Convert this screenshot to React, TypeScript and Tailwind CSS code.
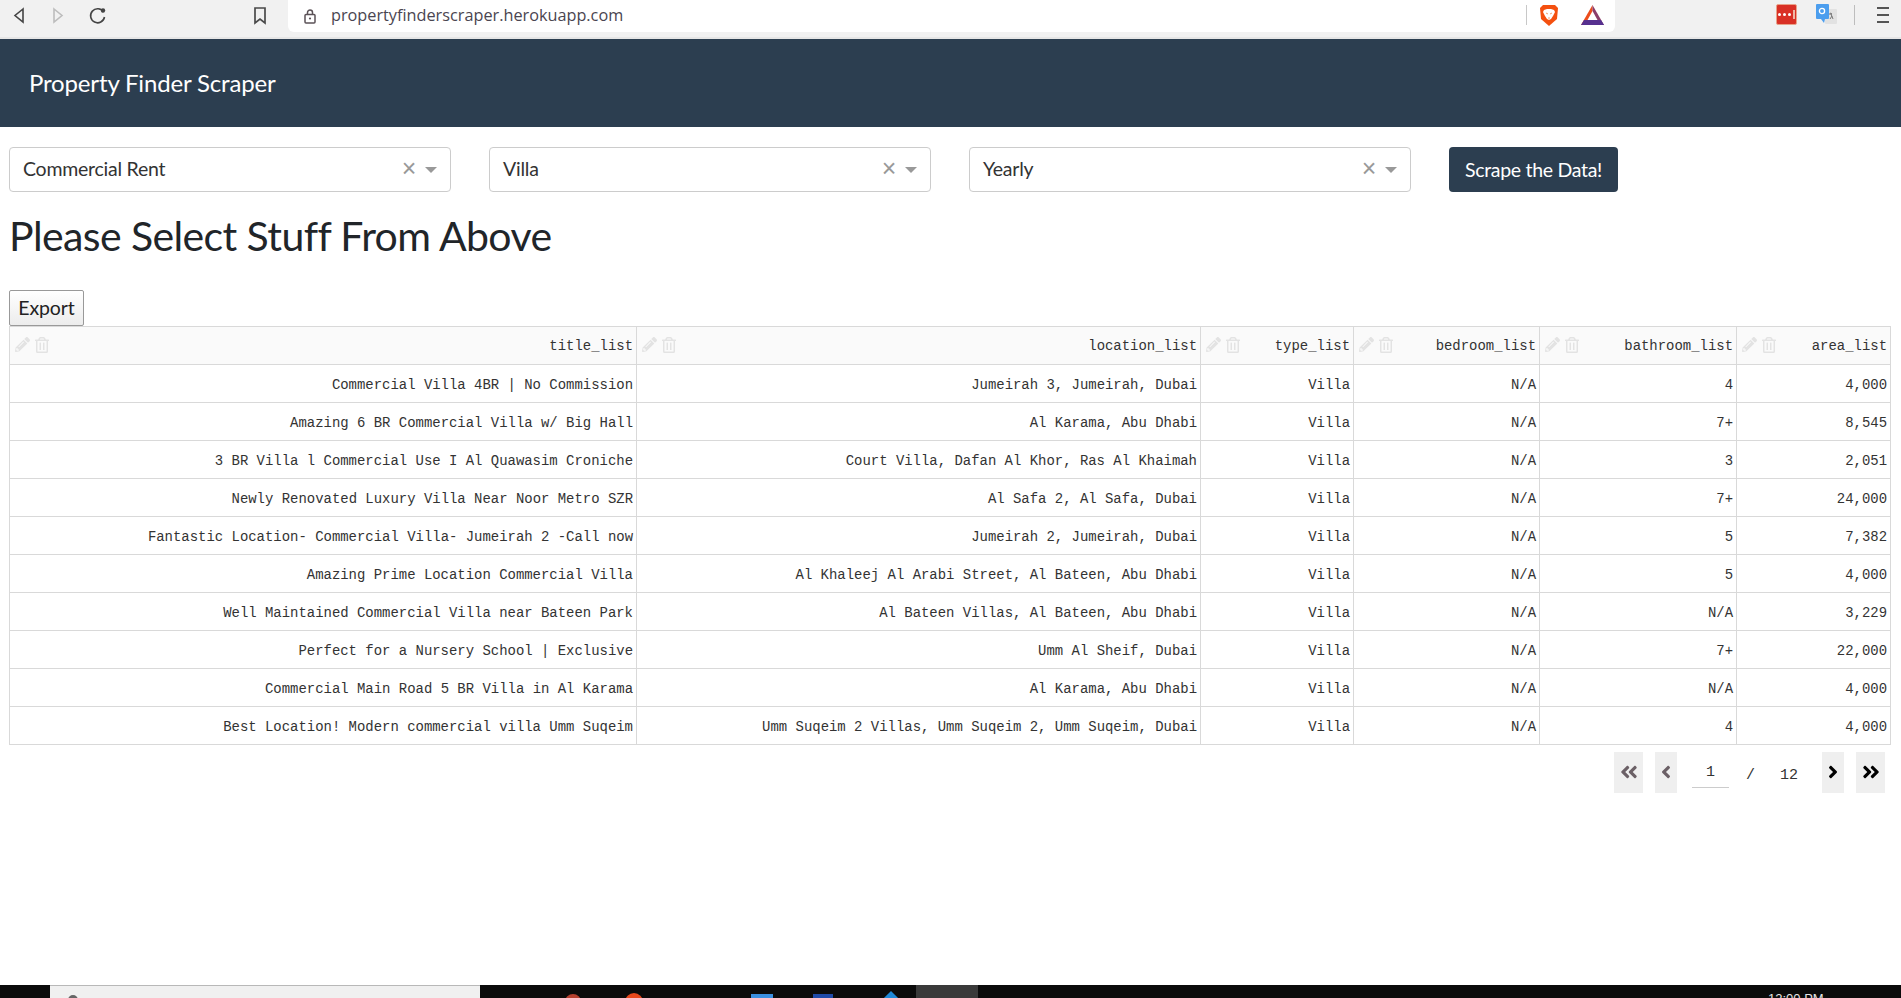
import { FaAngleDoubleLeft, FaAngleDoubleRight, FaAngleLeft, FaAngleRight, FaPencilAlt, FaRegTrashAlt } from 'react-icons/fa'

const rows = [
    ['Commercial Villa 4BR | No Commission', 'Jumeirah 3, Jumeirah, Dubai', 'Villa', 'N/A', '4', '4,000'],
    ['Amazing 6 BR Commercial Villa w/ Big Hall', 'Al Karama, Abu Dhabi', 'Villa', 'N/A', '7+', '8,545'],
    ['3 BR Villa l Commercial Use I Al Quawasim Croniche', 'Court Villa, Dafan Al Khor, Ras Al Khaimah', 'Villa', 'N/A', '3', '2,051'],
    ['Newly Renovated Luxury Villa Near Noor Metro SZR', 'Al Safa 2, Al Safa, Dubai', 'Villa', 'N/A', '7+', '24,000'],
    ['Fantastic Location- Commercial Villa- Jumeirah 2 -Call now', 'Jumeirah 2, Jumeirah, Dubai', 'Villa', 'N/A', '5', '7,382'],
    ['Amazing Prime Location Commercial Villa', 'Al Khaleej Al Arabi Street, Al Bateen, Abu Dhabi', 'Villa', 'N/A', '5', '4,000'],
    ['Well Maintained Commercial Villa near Bateen Park', 'Al Bateen Villas, Al Bateen, Abu Dhabi', 'Villa', 'N/A', 'N/A', '3,229'],
    ['Perfect for a Nursery School | Exclusive', 'Umm Al Sheif, Dubai', 'Villa', 'N/A', '7+', '22,000'],
    ['Commercial Main Road 5 BR Villa in Al Karama', 'Al Karama, Abu Dhabi', 'Villa', 'N/A', 'N/A', '4,000'],
    ['Best Location! Modern commercial villa Umm Suqeim', 'Umm Suqeim 2 Villas, Umm Suqeim 2, Umm Suqeim, Dubai', 'Villa', 'N/A', '4', '4,000'],
]

const columns = [
    { name: 'title_list', width: 'w-[627px]' },
    { name: 'location_list', width: 'w-[564px]' },
    { name: 'type_list', width: 'w-[153px]' },
    { name: 'bedroom_list', width: 'w-[186px]' },
    { name: 'bathroom_list', width: 'w-[197px]' },
    { name: 'area_list', width: 'w-[154px]' },
]

const BrowserBar = () => (
    <div className="h-[39px] shrink-0 bg-[#f1f1f1] border-b-2 border-[#e6e6e6] flex items-start relative">
        <svg className="absolute left-[12px] top-[7px]" width="14" height="17" viewBox="0 0 14 17" fill="none" stroke="#444" strokeWidth="1.6"><path d="M11 2 3 8.5 11 15z" /></svg>
        <svg className="absolute left-[51px] top-[7px]" width="14" height="17" viewBox="0 0 14 17" fill="none" stroke="#bdbdbd" strokeWidth="1.6"><path d="M3 2l8 6.5L3 15z" /></svg>
        <svg className="absolute left-[88px] top-[5px]" width="20" height="20" viewBox="0 0 20 20" fill="none" stroke="#444" strokeWidth="1.6"><path d="M15.5 7A7 7 0 1 0 16.5 12" /><circle cx="15" cy="5.5" r="2.2" fill="#444" stroke="none" /></svg>
        <svg className="absolute left-[253px] top-[6px]" width="14" height="19" viewBox="0 0 14 19" fill="none" stroke="#4a4a4a" strokeWidth="1.7"><path d="M2 2h10v15l-5-4-5 4z" /></svg>
        <div className="absolute left-[288px] top-0 w-[1327px] h-[32px] bg-white rounded-b-[6px] flex items-center">
            <svg className="ml-[16px]" width="12" height="15" viewBox="0 0 12 15" fill="none" stroke="#5b5257" strokeWidth="1.5"><rect x="1" y="5.5" width="10" height="8.5" rx="1" /><path d="M3.5 5.5V3.5a2.5 2.5 0 0 1 5 0v2" /><circle cx="6" cy="9.5" r="1.1" fill="#5b5257" stroke="none" /></svg>
            <span className="ml-[15px] pb-[1px] text-[16.25px] text-[#4a4550] font-['Open_Sans',sans-serif]">propertyfinderscraper.herokuapp.com</span>
            <div className="absolute left-[1238px] top-[5px] h-[20px] w-px bg-[#c8c8c8]" />
            <svg className="absolute left-[1251px] top-[4px]" width="20" height="23" viewBox="0 0 20 23"><path d="M4 1h12l3 3-1 11-8 7-8-7L1 4z" fill="#f4500f" /><path d="M5 6l3-1h4l3 1 1 2-2 4-2 3-2 1-2-1-2-3-2-4z" fill="#fff" /><path d="M7 9l2 1M13 9l-2 1M9 14h2" stroke="#f4a070" strokeWidth="1" /></svg>
            <svg className="absolute left-[1293px] top-[5px]" width="23" height="20" viewBox="0 0 23 20"><path d="M11.5 0 0 20h6l5.5-10z" fill="#ec4d1b" /><path d="M11.5 0 23 20h-6l-5.5-10z" fill="#8b3d6a" /><path d="M0 20l3-5h17l3 5z" fill="#56308f" /><path d="M11.5 6l5 9h-10z" fill="#fff" /></svg>
        </div>
        <div className="absolute left-[1776px] top-[4px] w-[21px] h-[21px] bg-[#d93025] rounded-[2px] border border-[#e8a38a] flex items-center justify-center gap-[2px]">
            <span className="w-[3px] h-[3px] rounded-full bg-white" />
            <span className="w-[3px] h-[3px] rounded-full bg-white" />
            <span className="w-[3px] h-[3px] rounded-full bg-white" />
            <span className="w-[2px] h-[9px] bg-[#eeb7a5]" />
        </div>
        <svg className="absolute left-[1816px] top-[4px]" width="21" height="22" viewBox="0 0 21 22"><rect x="9" y="5" width="12" height="15" rx="1" fill="#e2e2e2" /><path d="M14 9l2 1-3 0M15 10l2 5M16 12l-2 3" stroke="#777" strokeWidth="1" fill="none" /><path d="M1 0h11a1 1 0 0 1 1 1v13a1 1 0 0 1-1 1H9l-1 4-3-4H1a1 1 0 0 1-1-1V1a1 1 0 0 1 1-1z" fill="#4c9eee" /><circle cx="6" cy="7" r="2.6" fill="none" stroke="#fff" strokeWidth="1.3" /></svg>
        <div className="absolute left-[1854px] top-[5px] h-[20px] w-px bg-[#bdbdbd]" />
        <div className="absolute left-[1877px] top-[7px] w-[12px] flex flex-col gap-[5px]">
            <span className="h-[2px] bg-[#555]" />
            <span className="h-[2px] bg-[#555]" />
            <span className="h-[2px] bg-[#555]" />
        </div>
    </div>
)

const Dropdown = ({ value }: { value: string }) => (
    <div className="w-[442px] h-[45px] bg-white border border-[#ccc] rounded-[4px] flex items-center pl-[13px] pr-[13px] text-[19.5px] tracking-[-0.24px] text-[#333]">
        <span className="flex-1 pb-[1px]">{value}</span>
        <span className="text-[#999] text-[25px] leading-none mr-[9px] pb-[3px] font-['Liberation_Sans',sans-serif]">×</span>
        <span className="w-0 h-0 border-x-[6px] border-t-[6px] border-x-transparent border-t-[#999]" />
    </div>
)

const PageButton = ({ children, className, width }: { children: React.ReactNode; className: string; width: string }) => (
    <div className={`${width} h-[41px] bg-[#efefef] flex items-center justify-center pb-[2px] text-[20px] ${className}`}>
        {children}
    </div>
)

const App = () => {
    return (
        <div className="h-[998px] w-[1901px] overflow-hidden flex flex-col bg-white font-['Lato',sans-serif] text-[#212529]">
            <BrowserBar />

            <nav className="h-[88px] shrink-0 bg-[#2c3e50] flex items-center pl-[29px]">
                <span className="text-white text-[24px] tracking-[-0.16px] pb-[1px]">Property Finder Scraper</span>
            </nav>

            <div className="flex gap-[38px] pl-[9px] pt-[20px]">
                <Dropdown value="Commercial Rent" />
                <Dropdown value="Villa" />
                <Dropdown value="Yearly" />
                <button className="w-[169px] h-[45px] bg-[#2c3e50] text-white text-[19.5px] tracking-[-0.3px] rounded-[4px]">
                    Scrape the Data!
                </button>
            </div>

            <h1 className="pl-[9px] mt-[19px] text-[41px] tracking-[-0.6px] leading-[50px] font-normal">Please Select Stuff From Above</h1>

            <div className="pl-[9px] mt-[29px]">
                <button className="h-[36px] w-[75px] border border-[#999] rounded-[2px] bg-linear-to-b from-white to-[#ececec] text-[19.5px] tracking-[-0.1px] text-[#222]">
                    Export
                </button>
            </div>

            <table className="ml-[9px] w-[1881px] table-fixed border-collapse font-['Liberation_Mono',monospace] text-[13.94px] text-[#333]">
                <colgroup>
                    {columns.map((column) => (
                        <col key={column.name} className={column.width} />
                    ))}
                </colgroup>
                <thead>
                    <tr className="h-[38px] bg-[#fafafa]">
                        {columns.map((column) => (
                            <th key={column.name} className="border border-[#d9d9d9] pr-[3px] font-normal text-right">
                                <div className="flex items-center">
                                    <FaPencilAlt className="ml-[5px] mb-[2px] text-[15px] text-[#e3e3e3]" />
                                    <FaRegTrashAlt className="ml-[4px] mb-[2px] text-[16px] text-[#e3e3e3]" />
                                    <span className="flex-1 pt-[2px]">{column.name}</span>
                                </div>
                            </th>
                        ))}
                    </tr>
                </thead>
                <tbody>
                    {rows.map((row) => (
                        <tr key={row[0]} className="h-[38px]">
                            {row.map((cell, i) => (
                                <td key={i} className="border border-[#d9d9d9] pr-[3px] pt-[3px] text-right whitespace-nowrap">
                                    {cell}
                                </td>
                            ))}
                        </tr>
                    ))}
                </tbody>
            </table>

            <div className="flex items-start mt-[7px] pl-[1614px] font-['Liberation_Mono',monospace] text-[15px] text-[#333]">
                <PageButton width="w-[29px]" className="text-[#6b6066]"><FaAngleDoubleLeft /></PageButton>
                <PageButton width="w-[22px] ml-[12px]" className="text-[#6b6066]"><FaAngleLeft /></PageButton>
                <div className="w-[37px] h-[36px] ml-[15px] border-b border-[#ccc] flex items-center justify-center pt-[7px]">1</div>
                <span className="ml-[17px] pt-[13px]">/</span>
                <span className="ml-[25px] pt-[13px]">12</span>
                <PageButton width="w-[22px] ml-[24px]" className="text-black"><FaAngleRight /></PageButton>
                <PageButton width="w-[29px] ml-[12px]" className="text-black"><FaAngleDoubleRight /></PageButton>
            </div>

            {/* taskbar, cut off by the bottom of the window */}
            <div className="mt-auto h-[13px] shrink-0 bg-[#0b0b0b] relative overflow-hidden">
                <div className="absolute left-[50px] top-0 w-[430px] h-[13px] bg-[#f0f0f0] border-t border-[#b8b8b8]">
                    <span className="absolute left-[18px] top-[9px] w-[10px] h-[10px] rounded-full bg-[#666]" />
                </div>
                <span className="absolute left-[565px] top-[9px] w-[16px] h-[16px] rounded-full bg-[#b5402f]" />
                <span className="absolute left-[625px] top-[8px] w-[18px] h-[18px] rounded-full bg-[#e8481c]" />
                <span className="absolute left-[751px] top-[9px] w-[22px] h-[6px] bg-[#3a8fe0]" />
                <span className="absolute left-[813px] top-[9px] w-[20px] h-[6px] bg-[#1f4aa8]" />
                <span className="absolute left-[886px] top-[8px] w-[10px] h-[10px] rotate-45 bg-[#1e88d8]" />
                <div className="absolute left-[916px] top-0 w-[62px] h-[13px] bg-[#3a3a3a]" />
                <span className="absolute left-[1768px] top-[6px] text-[13px] leading-[15px] text-[#e5e5e5] font-['Liberation_Sans',sans-serif]">12:00 PM</span>
            </div>
        </div>
    )
}

export default App
